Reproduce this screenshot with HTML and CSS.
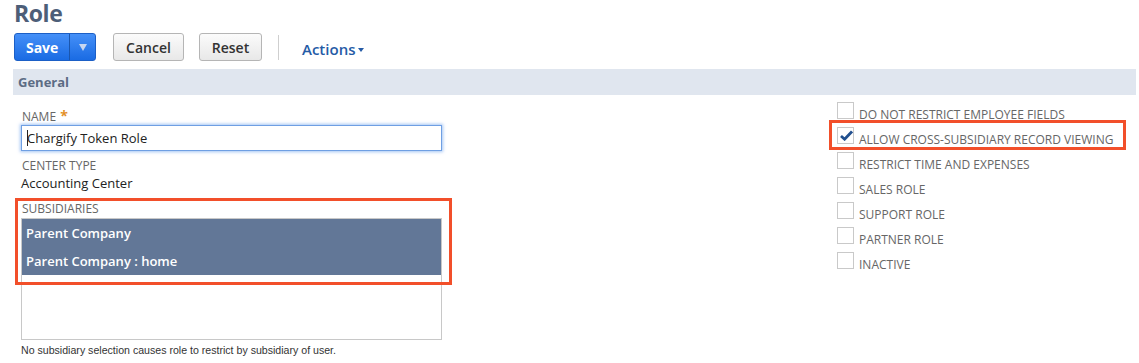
FILE: index.html
```html
<!DOCTYPE html>
<html>
<head>
<meta charset="utf-8">
<link rel="stylesheet" href="styles.css">
</head>
<body>
<div class="page">
  <h1 class="title">Role</h1>
  <div class="toolbar">
    <div class="split">
      <button class="split-main">Save</button>
      <button class="split-arrow"><span class="tri"></span></button>
    </div>
    <button class="btn btn-cancel">Cancel</button>
    <button class="btn btn-reset">Reset</button>
    <span class="sep"></span>
    <a class="actions">Actions<span class="caret"></span></a>
  </div>
  <div class="section">General</div>
  <div class="content">
    <div class="left">
      <div class="label first">NAME <span class="req">*</span></div>
      <div class="input">Chargify Token Role</div>
      <div class="label">CENTER TYPE</div>
      <div class="value">Accounting Center</div>
      <div class="label subs">SUBSIDIARIES</div>
      <div class="listbox">
        <div class="opt">Parent Company</div>
        <div class="opt">Parent Company : home</div>
      </div>
      <div class="note">No subsidiary selection causes role to restrict by subsidiary of user.</div>
      <div class="mark mark-left"></div>
    </div>
    <div class="right">
      <div class="row"><span class="cb"></span><span class="cb-label">DO NOT RESTRICT EMPLOYEE FIELDS</span></div>
      <div class="row"><span class="cb checked"><svg width="13" height="11" viewBox="0 0 13 11"><path d="M1 6 L4.6 9.2 L12 1.4" fill="none" stroke="#22508f" stroke-width="2.8" stroke-linejoin="miter"/></svg></span><span class="cb-label">ALLOW CROSS-SUBSIDIARY RECORD VIEWING</span></div>
      <div class="row"><span class="cb"></span><span class="cb-label">RESTRICT TIME AND EXPENSES</span></div>
      <div class="row"><span class="cb"></span><span class="cb-label">SALES ROLE</span></div>
      <div class="row"><span class="cb"></span><span class="cb-label">SUPPORT ROLE</span></div>
      <div class="row"><span class="cb"></span><span class="cb-label">PARTNER ROLE</span></div>
      <div class="row"><span class="cb"></span><span class="cb-label">INACTIVE</span></div>
      <div class="mark mark-right"></div>
    </div>
  </div>
</div>
</body>
</html>
```
FILE: styles.css
```css
* { box-sizing: border-box; }
html, body { margin: 0; padding: 0; background: #fff; }
body { font-family: "Open Sans", "DejaVu Sans", sans-serif; color: #222; }
.page { padding: 0 3px 0 13px; }
.title {
  margin: 0 0 0 1px;
  font-size: 23px;
  line-height: 26px;
  letter-spacing: -0.4px;
  font-weight: 700;
  color: #4d5e78;
}
.toolbar {
  margin-top: 7px;
  height: 28px;
  display: flex;
  align-items: center;
  padding-left: 1px;
}
.split {
  display: flex;
  width: 82px;
  height: 28px;
  border: 1px solid #1c5fc6;
  border-radius: 3px;
  background: linear-gradient(#4590f8, #1a6be3);
  overflow: hidden;
}
.split button {
  border: 0;
  background: transparent;
  padding: 0;
  margin: 0;
  font-family: inherit;
}
.split-main {
  width: 55px;
  color: #fff;
  font-weight: 700;
  font-size: 14px;
}
.split-arrow {
  width: 26px;
  border-left: 1px solid #1b56ad !important;
  display: flex;
  align-items: center;
  justify-content: center;
}
.tri {
  width: 0; height: 0;
  border-left: 4px solid transparent;
  border-right: 4px solid transparent;
  border-top: 7px solid #c7d6f0;
  margin-top: 1px;
}
.btn {
  height: 28px;
  border: 1px solid #b5b5b5;
  border-radius: 3px;
  background: linear-gradient(#fbfbfb, #e8e8e8);
  font-family: inherit;
  font-size: 14px;
  font-weight: 600;
  color: #333;
  padding: 0;
}
.btn-cancel { margin-left: 17px; width: 71px; }
.btn-reset { margin-left: 15px; width: 63px; }
.sep {
  margin-left: 16px;
  width: 1px;
  height: 25px;
  background: #cfcfcf;
}
.actions {
  margin-left: 23px;
  margin-top: 4px;
  font-size: 15px;
  font-weight: 600;
  color: #255ba6;
  display: flex;
  align-items: center;
}
.caret {
  width: 0; height: 0;
  margin-left: 3px;
  margin-top: 2px;
  border-left: 3.5px solid transparent;
  border-right: 3.5px solid transparent;
  border-top: 4px solid #255ba6;
}
.section {
  margin-top: 8px;
  height: 26px;
  background: #e0e6ef;
  font-size: 13px;
  font-weight: 700;
  color: #5c6c84;
  line-height: 26px;
  padding-left: 5px;
}
.content {
  display: flex;
  align-items: flex-start;
}
.left {
  position: relative;
  width: 430px;
  margin-left: 8px;
}
.label {
  font-size: 12px;
  line-height: 16px;
  color: #666;
  padding-left: 1px;
}
.label.first { margin-top: 14px; }
.req { color: #e3902a; font-weight: 700; font-size: 14px; line-height: 12px; margin-left: 1px; }
.input {
  height: 26px;
  border: 1px solid #6f9fe3;
  box-shadow: 0 0 3px 1px rgba(90, 150, 235, 0.55);
  font-size: 13px;
  line-height: 24px;
  padding-left: 5px;
  margin-bottom: 7px;
  color: #222;
  width: 421px;
}
.input::before {
  content: "";
  display: inline-block;
  width: 1px;
  height: 16px;
  background: #222;
  vertical-align: -3px;
  margin-right: -1px;
}
.value {
  font-size: 13px;
  line-height: 18px;
  color: #222;
  margin-bottom: 9px;
}
.label.subs { margin-bottom: 1px; }
.listbox {
  width: 421px;
  height: 122px;
  border: 1px solid #c8c8c8;
}
.opt {
  height: 28px;
  background: #627797;
  color: #fff;
  font-weight: 600;
  font-size: 13px;
  line-height: 28px;
  padding-left: 4px;
}
.note {
  margin-top: 3px;
  font-family: "Liberation Sans", Arial, sans-serif;
  font-size: 10.6px;
  line-height: 14px;
  color: #333;
}
.mark {
  position: absolute;
  border: 3px solid #f24f2a;
  pointer-events: none;
}
.mark-left {
  left: -6px;
  top: 103px;
  width: 437px;
  height: 87px;
}
.right {
  position: relative;
  margin-left: 386px;
  padding-top: 7px;
}
.row {
  display: flex;
  align-items: flex-start;
  height: 25px;
}
.cb {
  width: 17px;
  height: 17px;
  border: 1px solid #c9c9c9;
  background: #fff;
  display: flex;
  align-items: center;
  justify-content: center;
}
.cb svg { display: block; margin-left: 1px; }
.cb-label {
  margin-left: 5px;
  margin-top: 5px;
  font-size: 12px;
  line-height: 16px;
  color: #666;
  white-space: nowrap;
}
.mark-right {
  left: -8px;
  top: 25px;
  width: 297px;
  height: 30px;
}
```
